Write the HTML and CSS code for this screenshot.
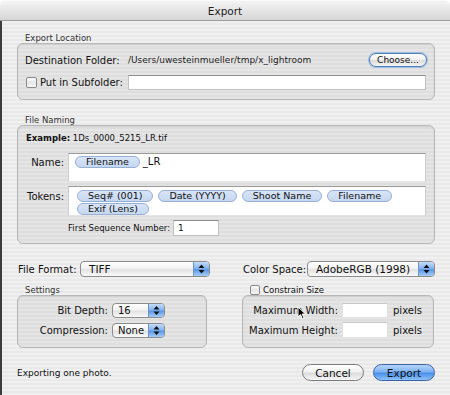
FILE: index.html
```html
<!DOCTYPE html>
<html lang="en">

<head>
    <meta charset="UTF-8"/>
    <title>Export</title>
    <link rel="stylesheet" href="styles.css">
</head>

<body>
<div class="window">
    <div class="titlebar">Export</div>
    <div class="content">
        <!-- Export Location -->
        <div class="group-label">Export Location</div>
        <div class="box location">
            <span class="label">Destination Folder:</span>
            <span class="path">/Users/uwesteinmueller/tmp/x_lightroom</span>
            <button class="push choose">Choose...</button>
            <label class="check-label"><span class="check"></span>Put in Subfolder:</label>
            <div class="field subfolder"></div>
        </div>

        <!-- File Naming -->
        <div class="group-label naming-label">File Naming</div>
        <div class="box naming">
            <div class="example"><b>Example:</b> 1Ds_0000_5215_LR.tif</div>
            <div class="naming-grid">
                <span class="label">Name:</span>
                <div class="token-field name-field"><span class="token">Filename</span><span class="suffix">_LR</span></div>
                <span class="label tokens-label">Tokens:</span>
                <div class="token-field tokens">
                    <span class="token">Seq# (001)</span>
                    <span class="token">Date (YYYY)</span>
                    <span class="token">Shoot Name</span>
                    <span class="token">Filename</span>
                    <span class="token">Exif (Lens)</span>
                </div>
                <span></span>
                <div class="seq">
                    <span class="seq-label">First Sequence Number:</span>
                    <div class="field seq-field">1</div>
                </div>
            </div>
        </div>

        <!-- Format + Color space -->
        <div class="columns">
            <div class="col">
                <div class="popup-row">
                    <span class="label">File Format:</span>
                    <div class="popup format"><span class="popup-text">TIFF</span><span class="arrows"></span></div>
                </div>
                <div class="group-label sub-label">Settings</div>
                <div class="box settings">
                    <span class="label">Bit Depth:</span>
                    <div class="popup small"><span class="popup-text">16</span><span class="arrows"></span></div>
                    <span class="label">Compression:</span>
                    <div class="popup small"><span class="popup-text">None</span><span class="arrows"></span></div>
                </div>
            </div>
            <div class="col">
                <div class="popup-row">
                    <span class="label">Color Space:</span>
                    <div class="popup space"><span class="popup-text">AdobeRGB (1998)</span><span class="arrows"></span></div>
                </div>
                <label class="check-label constrain"><span class="check"></span>Constrain Size</label>
                <div class="box size">
                    <span class="label">Maximum Width:</span>
                    <div class="field"></div>
                    <span class="unit">pixels</span>
                    <span class="label">Maximum Height:</span>
                    <div class="field"></div>
                    <span class="unit">pixels</span>
                </div>
            </div>
        </div>

        <div class="footer">
            <span class="status">Exporting one photo.</span>
            <div class="buttons">
                <button class="push cancel">Cancel</button>
                <button class="push default">Export</button>
            </div>
        </div>
    </div>

    <!-- mouse pointer over the size box -->
    <svg class="cursor" width="10" height="14" viewBox="0 0 10 14">
        <path d="M1 1 L1 11 L3.5 8.6 L5.4 12.8 L7 12.1 L5.2 8 L8.6 8 Z" fill="#000" stroke="#fff" stroke-width="1"/>
    </svg>
</div>
</body>
</html>
```

FILE: styles.css
```css
* {
    box-sizing: border-box;
}

body {
    margin: 0;
    background: #fff;
    font-family: "DejaVu Sans", "Liberation Sans", sans-serif;
    font-size: 10px;
    color: #111;
}

.window {
    position: relative;
    width: 450px;
    height: 395px;
    overflow: hidden;
}

.titlebar {
    height: 21px;
    line-height: 20px;
    text-align: center;
    font-size: 10.5px;
    color: #222;
    background: linear-gradient(#f4f4f4, #e2e2e2 60%, #d6d6d6);
    border-bottom: 1px solid #9c9c9c;
    border-radius: 5px 5px 0 0;
    border-top: 1px solid #fafafa;
}

.content {
    height: 374px;
    border-left: 2px solid #3c3c3c;
    padding: 12px 15px 0 15px;
    background: repeating-linear-gradient(#f0f0f0 0, #f0f0f0 2px, #e9e9e9 2px, #e9e9e9 4px);
}

.group-label {
    height: 10px;
    line-height: 10px;
    font-size: 8.5px;
    color: #333;
    padding-left: 8px;
}

.naming-label {
    margin-top: 15px;
}

.box {
    background: rgba(0, 0, 0, 0.045);
    border: 1px solid #b7b7b7;
    border-radius: 6px;
    box-shadow: inset 0 1px 2px rgba(0, 0, 0, 0.08);
}

.label {
    white-space: nowrap;
}

/* export location */
.location {
    height: 57px;
    padding: 9px 8px 0 7px;
    display: grid;
    grid-template-columns: 103px 1fr auto;
    grid-template-rows: 14px 15px;
    row-gap: 8px;
    align-items: center;
}

.path {
    font-size: 9px;
    color: #222;
}

.check-label {
    display: flex;
    align-items: center;
    white-space: nowrap;
}

.check {
    width: 11px;
    height: 11px;
    margin: 0 3px 0 1px;
    border: 1px solid #8a8a8a;
    border-radius: 2px;
    background: linear-gradient(#fdfdfd, #e6e6e6 50%, #f6f6f6);
}

.field {
    height: 15px;
    background: #fff;
    border: 1px solid #c2c2c2;
    border-top-color: #8e8e8e;
}

.subfolder {
    grid-column: 2 / 4;
}

/* buttons */
.push {
    appearance: none;
    font-family: inherit;
    color: #111;
    padding: 0;
    border: 1px solid #7c7c7c;
    border-radius: 9px;
    background: linear-gradient(#ffffff, #f1f1f1 45%, #dcdcdc 55%, #f5f5f5);
}

.choose {
    width: 58px;
    height: 14px;
    font-size: 9px;
    line-height: 11px;
    border-color: #4f7fbe;
    box-shadow: 0 0 0 1px #9dbde3;
    margin-right: -1px;
}

/* file naming */
.naming {
    height: 119px;
    padding: 6px 8px 0 7px;
}

.example {
    height: 12px;
    line-height: 12px;
    font-size: 8.5px;
    padding-left: 1px;
}

.naming-grid {
    margin-top: 9px;
    display: grid;
    grid-template-columns: 39px 1fr;
    grid-template-rows: 29px 30px 16px;
    column-gap: 4px;
    row-gap: 4px;
}

.naming-grid > .label {
    text-align: right;
    padding-top: 4px;
}

.naming-grid > .tokens-label {
    padding-top: 5px;
}

.token-field {
    background: #fff;
    border-top: 1px solid #9a9a9a;
    border-left: 1px solid #cdcdcd;
    border-right: 1px solid #cdcdcd;
    border-bottom: 1px solid #e4e4e4;
}

.name-field {
    padding: 2px 6px;
    display: flex;
    align-items: flex-start;
}

.suffix {
    margin-left: 3px;
    line-height: 12px;
}

.tokens {
    padding: 3px 8px 0 8px;
    display: flex;
    flex-wrap: wrap;
    align-content: flex-start;
    column-gap: 5px;
    row-gap: 1px;
}

.token {
    height: 12px;
    line-height: 10px;
    font-size: 9.5px;
    padding: 0 10px;
    border: 1px solid #98afd6;
    border-radius: 6px;
    background: linear-gradient(#d9e5f7, #c5d7f1);
    white-space: nowrap;
}

.seq {
    display: flex;
    align-items: center;
}

.seq-label {
    font-size: 8.5px;
    width: 105px;
}

.seq-field {
    width: 46px;
    height: 16px;
    font-size: 9px;
    line-height: 14px;
    padding-left: 4px;
}

/* bottom columns */
.columns {
    margin-top: 17px;
    display: grid;
    grid-template-columns: 193px 193px;
    column-gap: 32px;
}

.popup-row {
    height: 16px;
    display: flex;
    align-items: center;
    justify-content: space-between;
    padding-left: 1px;
}

.popup {
    display: flex;
    height: 16px;
    border: 1px solid #8c8c8c;
    border-radius: 4px;
    background: linear-gradient(#ffffff, #f3f3f3 45%, #e2e2e2 55%, #fafafa);
    overflow: hidden;
}

.popup-text {
    flex: 1;
    padding-left: 8px;
    line-height: 14px;
    font-size: 10.5px;
    white-space: nowrap;
}

.arrows {
    flex: none;
    width: 16px;
    border-left: 1px solid #6f93c6;
    background: url("data:image/svg+xml;utf8,<svg xmlns='http://www.w3.org/2000/svg' width='16' height='14'><path d='M5 6 L8 2.5 L11 6 Z M5 8 L8 11.5 L11 8 Z' fill='%23111'/></svg>") center no-repeat,
    linear-gradient(#c4dcfa, #86b4ef 45%, #5a97e6 55%, #a6cdfb);
}

.format {
    width: 130px;
}

.space {
    width: 128px;
}

.sub-label {
    margin-top: 8px;
}

.settings {
    width: 190px;
    height: 53px;
    padding: 7px 0 0 0;
    display: grid;
    grid-template-columns: 90px 53px;
    grid-template-rows: 15px 15px;
    column-gap: 4px;
    row-gap: 5px;
    align-items: center;
}

.settings .label {
    text-align: right;
}

.popup.small {
    height: 15px;
}

.popup.small .popup-text {
    padding-left: 5px;
    line-height: 13px;
    font-size: 10px;
}

.constrain {
    margin-top: 8px;
    height: 10px;
    padding-left: 7px;
    font-size: 8.5px;
}

.constrain .check {
    width: 10px;
    height: 10px;
}

.size {
    width: 192px;
    height: 53px;
    padding: 7px 0 0 0;
    display: grid;
    grid-template-columns: 95px 46px auto;
    grid-template-rows: 15px 16px;
    column-gap: 4px;
    row-gap: 4px;
    align-items: center;
}

.size .label {
    text-align: right;
}

.size .field {
    height: 100%;
    border-color: #e2e2e2;
    border-top-color: #c8c8c8;
}

.unit {
    margin-left: 1px;
}

/* footer */
.footer {
    margin-top: 16px;
    display: flex;
    align-items: center;
    justify-content: space-between;
}

.status {
    font-size: 9px;
}

.buttons {
    display: flex;
    gap: 9px;
}

.cancel,
.default {
    width: 62px;
    height: 17px;
    font-size: 10.5px;
    line-height: 14px;
}

.default {
    border-color: #3c63a3;
    background: linear-gradient(#b5d5fb, #7fb3f3 45%, #4a90e8 55%, #8cc3fa);
}

.cursor {
    position: absolute;
    left: 297px;
    top: 306px;
}
```
